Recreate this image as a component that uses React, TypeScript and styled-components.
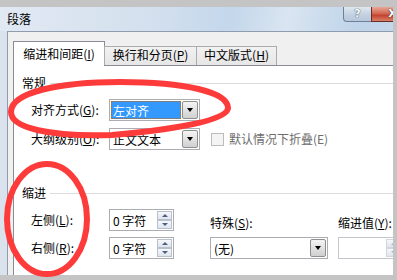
import React from 'react';
import styled, { createGlobalStyle, css } from 'styled-components';

const GlobalStyle = createGlobalStyle`
  html, body {
    margin: 0;
    padding: 0;
  }
  body {
    font-family: "Noto Sans CJK SC", "Noto Sans", sans-serif;
    font-size: 12px;
    color: #000;
  }
`;

// screenshot frame
const Screen = styled.div`
  position: relative;
  width: 397px;
  height: 280px;
  box-sizing: border-box;
  padding: 7px 4px 5px 0;
  background: #c4c4c4;
  display: flex;
  overflow: hidden;
`;

const Viewport = styled.div`
  flex: 1;
  overflow: hidden;
`;

const Window = styled.div`
  width: 421px;
  height: 300px;
  display: flex;
  flex-direction: column;
  background: linear-gradient(90deg, #dae3ed, #cddbea);
`;

const TitleBar = styled.div`
  height: 24px;
  flex-shrink: 0;
  display: flex;
  align-items: flex-start;
  padding: 0 7px;
  background: linear-gradient(100deg, #e1e9f3 0%, #d4e0ee 35%, #c4d7eb 55%, #d9e5f1 68%, #bfd3e9 85%, #c8d9eb 100%);
`;

const Title = styled.div`
  line-height: 16px;
  margin-top: 4px;
`;

const CaptionButtons = styled.div`
  margin-left: auto;
  display: flex;
`;

const HelpButton = styled.div`
  width: 28px;
  height: 15px;
  box-sizing: border-box;
  border: 1px solid #6f7f95;
  border-top: none;
  border-right: none;
  border-radius: 0 0 0 4px;
  background: linear-gradient(#dfe7f0, #c3d1e1 55%, #b7c8db);
  color: #fff;
  font-family: "DejaVu Sans", sans-serif;
  font-weight: bold;
  font-size: 11px;
  line-height: 14px;
  text-align: center;
  text-shadow: 0 0 1px #3d4c60, 0 0 1px #3d4c60;
`;

const CloseButton = styled.div`
  width: 43px;
  height: 15px;
  box-sizing: border-box;
  border: 1px solid #6b2c25;
  border-top: none;
  border-radius: 0 0 4px 0;
  background: linear-gradient(#e8a896, #d26a55 45%, #c4452f 60%, #d8806a);
  color: #fff;
  font-family: "DejaVu Sans", sans-serif;
  font-weight: bold;
  font-size: 11px;
  line-height: 14px;
  text-align: center;
  text-shadow: 0 0 1px #4a1a14, 0 0 1px #4a1a14;
`;

const Client = styled.div`
  flex: 1;
  margin: 0 7px;
  display: flex;
  flex-direction: column;
  padding: 9px 0 0 5px;
  background: #f0f0f0;
  border-top: 1px solid #8f9cad;
  border-left: 1px solid #8f9cad;
`;

const TabStrip = styled.div`
  height: 24px;
  display: flex;
  align-items: flex-end;
  position: relative;
  z-index: 1;
`;

const Tab = styled.div<{ $active?: boolean; $width: number }>`
  width: ${p => p.$width}px;
  box-sizing: border-box;
  display: flex;
  align-items: center;
  justify-content: center;
  line-height: 16px;
  border: 1px solid #acacac;
  border-bottom: none;
  ${p =>
    p.$active
      ? css`
          height: 25px;
          margin-bottom: -1px;
          background: #fff;
          border-color: #898c95;
        `
      : css`
          height: 19px;
          padding-bottom: 2px;
          margin-left: -1px;
          background: linear-gradient(#f2f2f2, #e6e6e6);
        `}
`;

const Panel = styled.div`
  flex: 1;
  display: flex;
  flex-direction: column;
  padding-left: 8px;
  background: #fff;
  border-top: 1px solid #898c95;
  border-left: 1px solid #898c95;
`;

const SectionHeader = styled.div<{ $top: number }>`
  margin-top: ${p => p.$top}px;
  display: flex;
  align-items: center;
  gap: 4px;
  line-height: 16px;

  &::after {
    content: '';
    flex: 1;
    height: 1px;
    background: #dcdcdc;
  }
`;

const FormGrid = styled.div<{ $cols: string; $rowGap: number }>`
  margin-top: 8px;
  padding-left: 9px;
  display: grid;
  grid-template-columns: ${p => p.$cols};
  grid-auto-rows: 22px;
  row-gap: ${p => p.$rowGap}px;
  align-items: center;
`;

const Label = styled.div<{ $end?: boolean }>`
  line-height: 16px;
  white-space: nowrap;
  ${p => p.$end && css`align-self: end;`}
`;

const Select = styled.div<{ $width: number }>`
  width: ${p => p.$width}px;
  height: 22px;
  box-sizing: border-box;
  padding: 1px;
  display: flex;
  border: 1px solid #abadb3;
  background: #fff;
`;

const SelectValue = styled.div<{ $selected?: boolean }>`
  flex: 1;
  display: flex;
  align-items: center;
  padding-left: 2px;
  white-space: nowrap;
  ${p =>
    p.$selected &&
    css`
      background: #3399ff;
      color: #fff;
      outline: 1px dotted #cc6600;
      outline-offset: -1px;
    `}
`;

const DropButton = styled.div`
  width: 16px;
  margin-left: 1px;
  box-sizing: border-box;
  border: 1px solid #8e8f8f;
  border-radius: 2px;
  background: linear-gradient(#f4f4f4, #e2e2e2 50%, #d0d0d0);
  display: flex;
  align-items: center;
  justify-content: center;

  &::after {
    content: '';
    border-left: 3.5px solid transparent;
    border-right: 3.5px solid transparent;
    border-top: 4px solid #000;
  }
`;

const SpinBox = styled.div<{ $disabled?: boolean }>`
  width: 65px;
  height: 22px;
  box-sizing: border-box;
  padding: 1px;
  display: flex;
  border: 1px solid ${p => (p.$disabled ? '#c4c6cb' : '#abadb3')};
  background: #fff;
`;

const SpinValue = styled.div`
  flex: 1;
  display: flex;
  align-items: center;
  padding-left: 2px;
  white-space: nowrap;
`;

const SpinButtons = styled.div`
  width: 15px;
  display: flex;
  flex-direction: column;
`;

const SpinButton = styled.div<{ $down?: boolean; $disabled?: boolean }>`
  flex: 1;
  box-sizing: border-box;
  border: 1px solid ${p => (p.$disabled ? '#d3d7dd' : '#b7c0cc')};
  background: linear-gradient(#f6f8fb, #dfe5ee);
  display: flex;
  align-items: center;
  justify-content: center;

  &::after {
    content: '';
    border-left: 3px solid transparent;
    border-right: 3px solid transparent;
    ${p =>
      p.$down
        ? css`border-top: 3px solid ${p.$disabled ? '#a9b3c4' : '#4c5f82'};`
        : css`border-bottom: 3px solid ${p.$disabled ? '#a9b3c4' : '#4c5f82'};`}
  }
`;

const CheckRow = styled.div<{ $top?: number; $indent?: number }>`
  margin-top: ${p => p.$top ?? 0}px;
  padding-left: ${p => p.$indent ?? 0}px;
  display: flex;
  align-items: center;
  gap: 5px;
`;

const CheckBox = styled.div<{ $disabled?: boolean }>`
  width: 13px;
  height: 13px;
  box-sizing: border-box;
  border: 1px solid ${p => (p.$disabled ? '#bcbcbc' : '#8e8f8f')};
  background: ${p => (p.$disabled ? '#f4f4f4' : 'linear-gradient(135deg, #dcdcdc, #fbfbfb)')};
`;

const CheckLabel = styled.div<{ $disabled?: boolean }>`
  line-height: 16px;
  white-space: nowrap;
  color: ${p => (p.$disabled ? '#6d6d6d' : '#000')};
`;

const Marks = styled.svg`
  position: absolute;
  left: 0;
  top: 0;
  pointer-events: none;
`;

function Spin({ value, disabled }: { value?: string; disabled?: boolean }) {
  return (
    <SpinBox $disabled={disabled}>
      <SpinValue>{value}</SpinValue>
      <SpinButtons>
        <SpinButton $disabled={disabled} />
        <SpinButton $down $disabled={disabled} />
      </SpinButtons>
    </SpinBox>
  );
}

export default function App() {
  return (
    <>
      <GlobalStyle />
      <Screen>
        <Viewport>
          <Window>
            <TitleBar>
              <Title>段落</Title>
              <CaptionButtons>
                <HelpButton>?</HelpButton>
                <CloseButton>X</CloseButton>
              </CaptionButtons>
            </TitleBar>

            <Client>
              <TabStrip>
                <Tab $active $width={92}>缩进和间距(<u>I</u>)</Tab>
                <Tab $width={93}>换行和分页(<u>P</u>)</Tab>
                <Tab $width={81}>中文版式(<u>H</u>)</Tab>
              </TabStrip>

              <Panel>
                <SectionHeader $top={9}>常规</SectionHeader>
                <FormGrid $cols="78px 102px auto" $rowGap={7}>
                  <Label>对齐方式(<u>G</u>):</Label>
                  <Select $width={91}>
                    <SelectValue $selected>左对齐</SelectValue>
                    <DropButton />
                  </Select>
                  <div />
                  <Label>大纲级别(<u>O</u>):</Label>
                  <Select $width={91}>
                    <SelectValue>正文文本</SelectValue>
                    <DropButton />
                  </Select>
                  <CheckRow>
                    <CheckBox $disabled />
                    <CheckLabel $disabled>默认情况下折叠(E)</CheckLabel>
                  </CheckRow>
                </FormGrid>

                <SectionHeader $top={35}>缩进</SectionHeader>
                <FormGrid $cols="78px 101px 128px 65px" $rowGap={6}>
                  <Label>左侧(<u>L</u>):</Label>
                  <Spin value="0 字符" />
                  <Label $end>特殊(<u>S</u>):</Label>
                  <Label $end>缩进值(<u>Y</u>):</Label>
                  <Label>右侧(<u>R</u>):</Label>
                  <Spin value="0 字符" />
                  <Select $width={118}>
                    <SelectValue>(无)</SelectValue>
                    <DropButton />
                  </Select>
                  <Spin disabled />
                </FormGrid>

                <CheckRow $top={14} $indent={10}>
                  <CheckBox />
                  <CheckLabel>对称缩进(<u>M</u>)</CheckLabel>
                </CheckRow>
              </Panel>
            </Client>
          </Window>
        </Viewport>

        <Marks width="397" height="280" viewBox="0 0 397 280">
          <path
            d="M 11 112 C 11 92, 60 82, 120 82 C 185 82, 228 92, 228 108 C 228 120, 180 129, 112 135 C 50 137, 11 128, 11 112 Z"
            fill="none"
            stroke="#fe3b3b"
            strokeWidth="6"
          />
          <ellipse cx="47" cy="219" rx="40" ry="55" fill="none" stroke="#fe3b3b" strokeWidth="6" />
        </Marks>
      </Screen>
    </>
  );
}
